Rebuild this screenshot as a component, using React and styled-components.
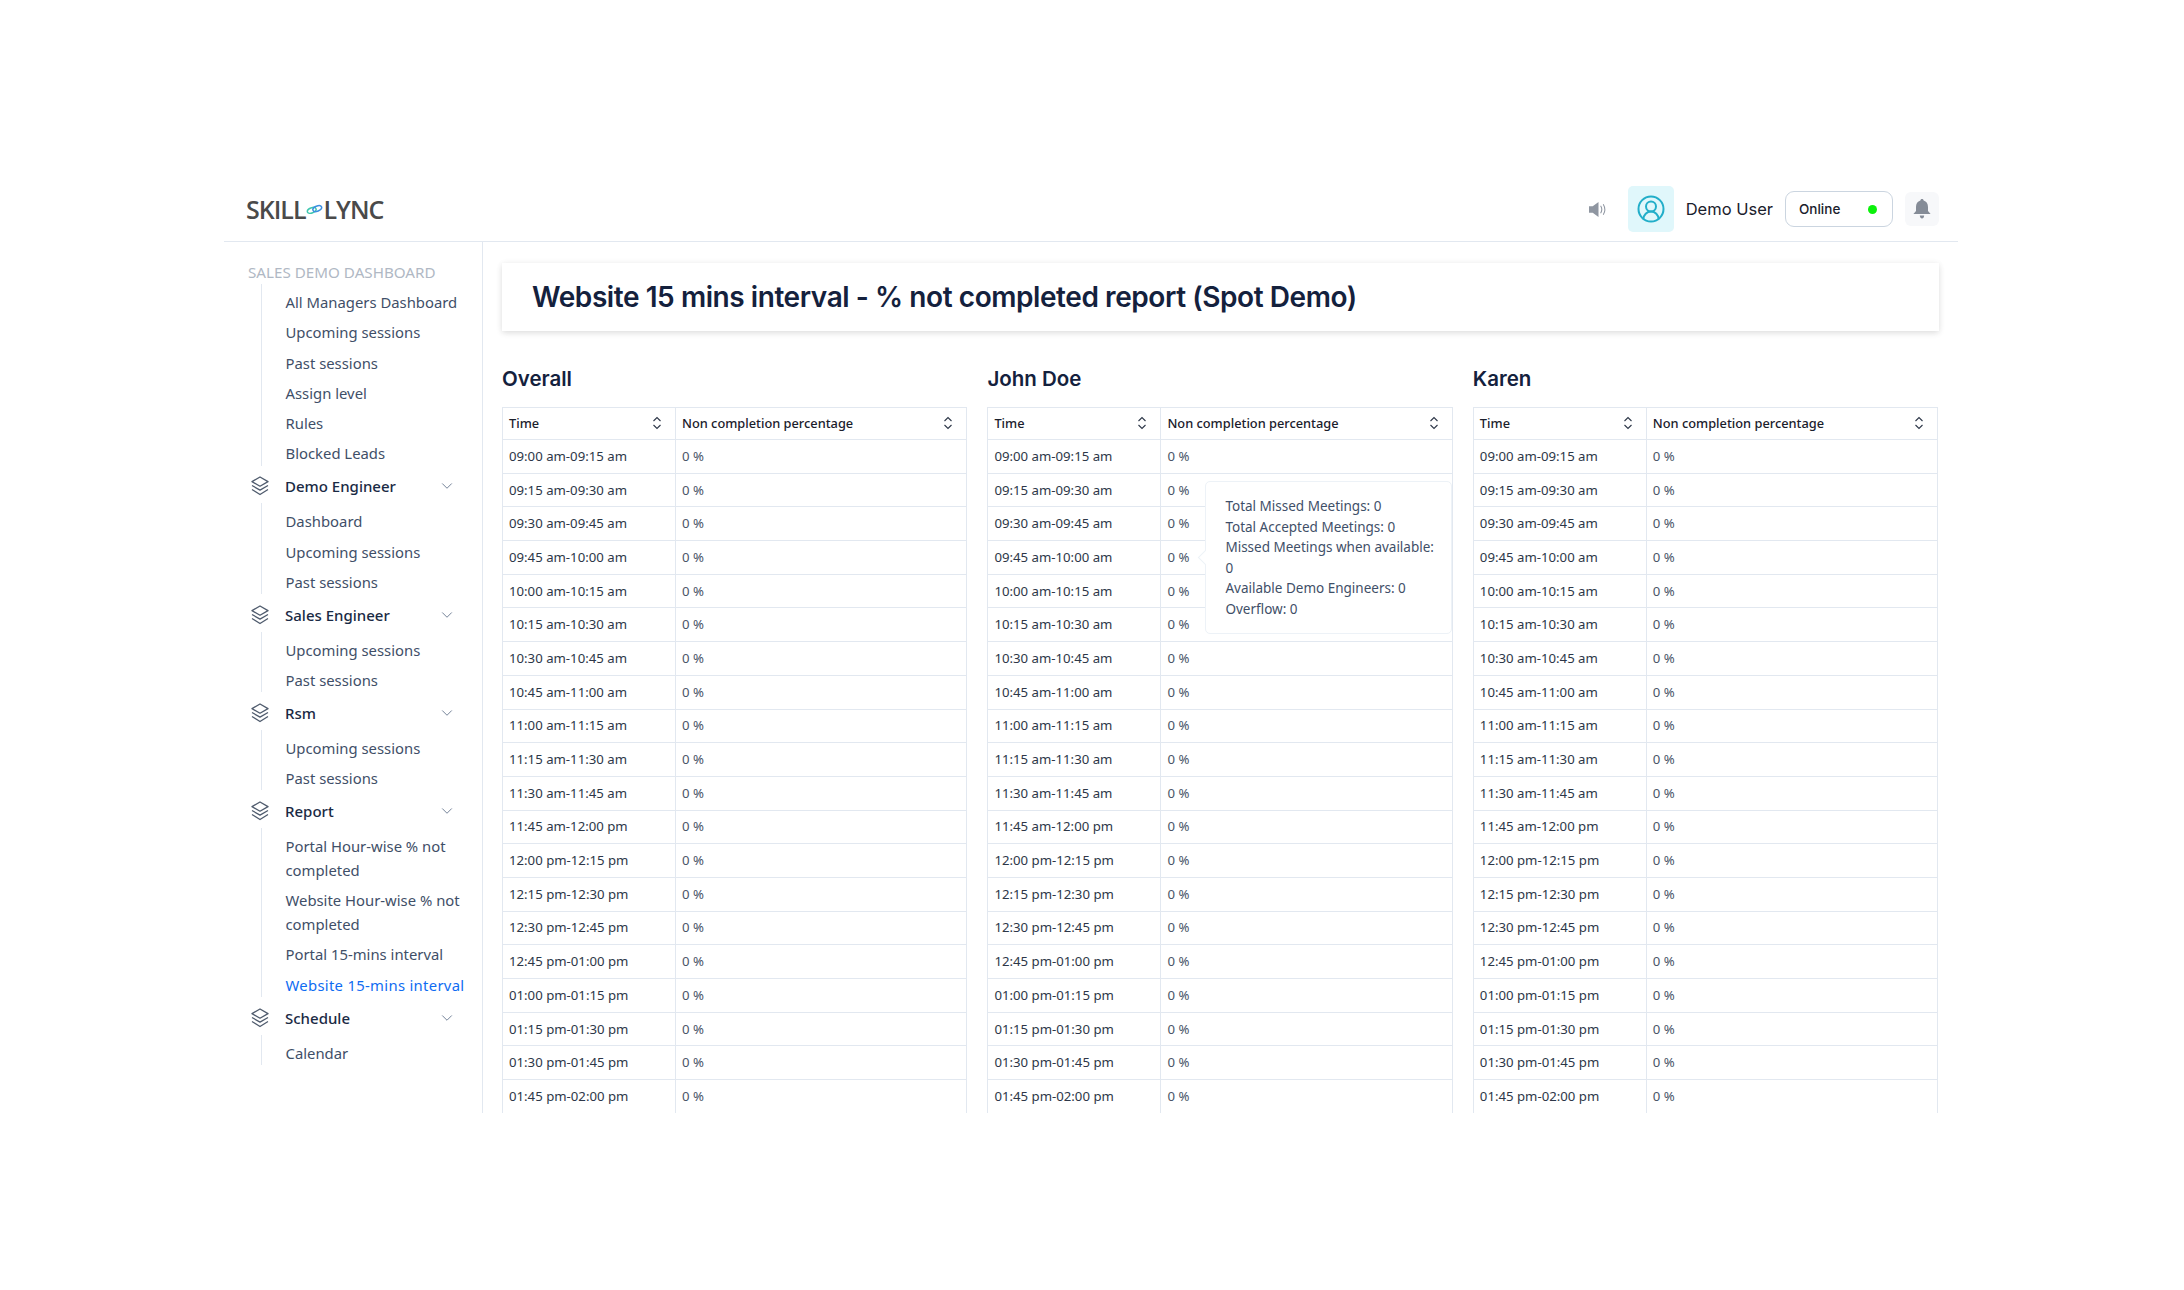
import React from 'react'
import styled, { createGlobalStyle } from 'styled-components'
import { ChevronDown, CircleUserRound } from 'lucide-react'

const GlobalStyle = createGlobalStyle`
    html, body {
        margin: 0;
        background: #fff;
    }
    * {
        box-sizing: border-box;
    }
`

const bodyFont = `'Noto Sans', 'Liberation Sans', sans-serif`
const headFont = `Inter, 'Liberation Sans', sans-serif`

const menu = [
    {
        items: [
            'All Managers Dashboard',
            'Upcoming sessions',
            'Past sessions',
            'Assign level',
            'Rules',
            'Blocked Leads'
        ]
    },
    { title: 'Demo Engineer', items: ['Dashboard', 'Upcoming sessions', 'Past sessions'] },
    { title: 'Sales Engineer', items: ['Upcoming sessions', 'Past sessions'] },
    { title: 'Rsm', items: ['Upcoming sessions', 'Past sessions'] },
    {
        title: 'Report',
        items: [
            'Portal Hour-wise % not completed',
            'Website Hour-wise % not completed',
            'Portal 15-mins interval',
            'Website 15-mins interval'
        ]
    },
    { title: 'Schedule', items: ['Calendar'] }
]

const slots = [
    '09:00 am-09:15 am', '09:15 am-09:30 am', '09:30 am-09:45 am', '09:45 am-10:00 am',
    '10:00 am-10:15 am', '10:15 am-10:30 am', '10:30 am-10:45 am', '10:45 am-11:00 am',
    '11:00 am-11:15 am', '11:15 am-11:30 am', '11:30 am-11:45 am', '11:45 am-12:00 pm',
    '12:00 pm-12:15 pm', '12:15 pm-12:30 pm', '12:30 pm-12:45 pm', '12:45 pm-01:00 pm',
    '01:00 pm-01:15 pm', '01:15 pm-01:30 pm', '01:30 pm-01:45 pm', '01:45 pm-02:00 pm'
]

const SortIcon = () => (
    <SortSvg viewBox='0 0 10 14' fill='none' stroke='#2d3748' strokeWidth='1.1'>
        <path d='M1.500 5 5 1.500 8.500 5' />
        <path d='M1.500 9 5 12.500 8.500 9' />
    </SortSvg>
)

const LayersIcon = () => (
    <svg width='18' height='20' viewBox='0 0 18 20' fill='none' stroke='#4f5b6d' strokeWidth='1.3' strokeLinejoin='round'>
        <path d='M9 1 17 5.600 9 10.200 1 5.600z' />
        <path d='M1 9.500 9 14.100 17 9.500' />
        <path d='M1 13.500 9 18.500 17 13.500' />
    </svg>
)

const ReportTable = ({ name, withTooltip }) => (
    <section>
        <TableName>{name}</TableName>
        <TableWrap>
            <Table>
                <colgroup>
                    <col width='173' />
                    <col />
                </colgroup>
                <thead>
                    <tr>
                        <Th>
                            <ThInner>
                                Time
                                <SortIcon />
                            </ThInner>
                        </Th>
                        <Th>
                            <ThInner>
                                Non completion percentage
                                <SortIcon />
                            </ThInner>
                        </Th>
                    </tr>
                </thead>
                <tbody>
                    {slots.map(slot => (
                        <tr key={slot}>
                            <TimeCell>{slot}</TimeCell>
                            <PercentCell>0 %</PercentCell>
                        </tr>
                    ))}
                </tbody>
            </Table>
            {withTooltip && (
                <Tooltip>
                    Total Missed Meetings: 0
                    <br />
                    Total Accepted Meetings: 0
                    <br />
                    Missed Meetings when available:
                    <br />
                    0
                    <br />
                    Available Demo Engineers: 0
                    <br />
                    Overflow: 0
                </Tooltip>
            )}
        </TableWrap>
    </section>
)

const App = () => (
    <Page>
        <GlobalStyle />
        <Frame>
            <Header>
                <Logo>
                    SKILL
                    <svg width='17' height='11' viewBox='0 0 18 12' fill='none' strokeWidth='1.600'>
                        <ellipse cx='6' cy='7' rx='5' ry='2.800' transform='rotate(-22 6 7)' stroke='#3fc7b0' />
                        <ellipse cx='12' cy='5' rx='5' ry='2.800' transform='rotate(-22 12 5)' stroke='#3c8fe0' />
                    </svg>
                    <LogoTail>LYNC</LogoTail>
                </Logo>
                <HeaderRight>
                    <svg width='19' height='17' viewBox='0 0 18 16' fill='#8f96a1'>
                        <path d='M0 5h3.500L9 1v14l-5.500-4H0z' />
                        <path d='M11 4.500c1.300 2 1.300 5 0 7M13.500 3c1.800 3 1.800 7 0 10' fill='none' stroke='#8f96a1' strokeWidth='1' />
                    </svg>
                    <Avatar>
                        <CircleUserRound size={30} strokeWidth={1.6} color='#22aec9' />
                    </Avatar>
                    <UserName>Demo User</UserName>
                    <StatusPill>
                        Online
                        <StatusDot />
                    </StatusPill>
                    <BellBox>
                        <svg width='18' height='20' viewBox='0 0 18 20' fill='#858c97'>
                            <path d='M9 0c1 0 1.600.7 1.600 1.600C13.500 2.400 15 4.800 15 8v4l2.600 3H.4L3 12V8c0-3.200 1.500-5.600 4.400-6.400C7.400.7 8 0 9 0z' />
                            <path d='M6.800 16.500h4.400C11 18.300 10.200 19.500 9 19.500s-2-1.200-2.200-3z' />
                        </svg>
                    </BellBox>
                </HeaderRight>
            </Header>
            <Body>
                <Sidebar>
                    <SideHeading>SALES DEMO DASHBOARD</SideHeading>
                    {menu.map((group, i) => (
                        <div key={i}>
                            {group.title && (
                                <GroupHeader>
                                    <GroupIcon>
                                        <LayersIcon />
                                    </GroupIcon>
                                    <GroupTitle>{group.title}</GroupTitle>
                                    <ChevronDown size={18} strokeWidth={1.3} color='#718096' />
                                </GroupHeader>
                            )}
                            <SubList>
                                {group.items.map(item => (
                                    <SubItem key={item} $active={item === 'Website 15-mins interval'}>
                                        {item}
                                    </SubItem>
                                ))}
                            </SubList>
                        </div>
                    ))}
                </Sidebar>
                <Main>
                    <TitleCard>
                        <Title>Website 15 mins interval - % not completed report (Spot Demo)</Title>
                    </TitleCard>
                    <Tables>
                        <ReportTable name='Overall' />
                        <ReportTable name='John Doe' withTooltip />
                        <ReportTable name='Karen' />
                    </Tables>
                </Main>
            </Body>
        </Frame>
    </Page>
)

export default App

const Page = styled.div`
    height: 1290px;
    padding: 177px 226px 0 224px;
    overflow: hidden;
`

const Frame = styled.div`
    height: 936px;
    overflow: hidden;
    display: flex;
    flex-direction: column;
`

const Header = styled.header`
    height: 65px;
    flex: none;
    display: flex;
    align-items: center;
    justify-content: space-between;
    padding: 0 19px 0 22px;
    border-bottom: 1px solid #e2e8f0;
`

const Logo = styled.div`
    display: flex;
    align-items: center;
    font-family: 'Open Sans', sans-serif;
    font-weight: 600;
    font-size: 25px;
    letter-spacing: -1px;
    color: #4a4a4a;
`

const LogoTail = styled.span`
    margin-left: 1px;
`

const HeaderRight = styled.div`
    display: flex;
    align-items: center;
`

const Avatar = styled.div`
    width: 46px;
    height: 46px;
    margin-left: 20px;
    border-radius: 5px;
    background: #e0f7fb;
    display: flex;
    align-items: center;
    justify-content: center;
`

const UserName = styled.span`
    margin-left: 12px;
    font-family: ${headFont};
    font-size: 16.5px;
    color: #1a202c;
`

const StatusPill = styled.div`
    width: 108px;
    height: 36px;
    margin-left: 12px;
    padding: 0 15px 0 13px;
    border: 1px solid #cbd5e0;
    border-radius: 9px;
    display: flex;
    align-items: center;
    justify-content: space-between;
    font-family: ${headFont};
    font-size: 13.5px;
    font-weight: 500;
    color: #1a202c;
`

const StatusDot = styled.span`
    width: 9px;
    height: 9px;
    border-radius: 50%;
    background: #0bf10b;
`

const BellBox = styled.div`
    width: 34px;
    height: 34px;
    margin-left: 12px;
    border-radius: 6px;
    background: #f7f8fa;
    display: flex;
    align-items: center;
    justify-content: center;
`

const Body = styled.div`
    flex: 1;
    display: flex;
    min-height: 0;
`

const Sidebar = styled.aside`
    width: 259px;
    flex: none;
    padding: 18px 12px 0 24px;
    border-right: 1px solid #e2e8f0;
    font-family: ${bodyFont};
`

const SideHeading = styled.div`
    height: 24px;
    line-height: 24px;
    font-size: 15.2px;
    color: #b0b8c4;
    white-space: nowrap;
`

const GroupHeader = styled.div`
    height: 34px;
    margin-top: 3.5px;
    display: flex;
    align-items: center;
    padding-right: 14px;
`

const GroupIcon = styled.span`
    width: 37px;
    display: flex;
    padding-left: 3px;
`

const GroupTitle = styled.span`
    flex: 1;
    font-size: 15px;
    font-weight: 500;
    color: #1a2a44;
`

const SubList = styled.ul`
    list-style: none;
    margin: 0 0 0 12.5px;
    padding: 0 0 0 24px;
    border-left: 1.5px solid #e2e8f0;
`

const SubItem = styled.li`
    padding-top: 6px;
    padding-bottom: 0.3px;
    line-height: 24px;
    font-size: 14.85px;
    letter-spacing: ${p => (p.$active ? '0.3px' : '0')};
    color: ${p => (p.$active ? '#0f6cf2' : '#3f4f68')};
`

const Main = styled.main`
    flex: 1;
    min-width: 0;
    padding: 21px 19px 0;
`

const TitleCard = styled.div`
    height: 68px;
    padding: 0 30px;
    display: flex;
    align-items: center;
    background: #fff;
    box-shadow: 0 2px 6px rgba(0, 0, 0, 0.12), 0 0 8px rgba(0, 0, 0, 0.03);
`

const Title = styled.h1`
    margin: 0;
    font-family: ${headFont};
    font-size: 28px;
    letter-spacing: -0.43px;
    font-weight: 600;
    color: #14213d;
`

const Tables = styled.div`
    display: grid;
    grid-template-columns: repeat(3, 1fr);
    gap: 20.3px;
    margin-top: 34px;
    padding-right: 1px;
`

const TableName = styled.h2`
    margin: 0 0 14px;
    height: 28px;
    line-height: 28px;
    font-family: ${headFont};
    font-size: 20.5px;
    font-weight: 600;
    color: #14213d;
`

const TableWrap = styled.div`
    position: relative;
`

const Table = styled.table`
    width: 100%;
    table-layout: fixed;
    border-collapse: collapse;
    font-family: ${bodyFont};
    font-size: 13.2px;
`

const Th = styled.th`
    height: 32px;
    padding: 0 6px;
    border: 1.5px solid #e2e8f0;
    font-size: 12.8px;
    font-weight: 500;
    text-align: left;
    color: #1a202c;
`

const ThInner = styled.div`
    display: flex;
    align-items: center;
    justify-content: space-between;
    padding: 0 7px 2px 0;
`

const SortSvg = styled.svg`
    width: 10px;
    height: 14px;
`

const TimeCell = styled.td`
    height: 33.7px;
    padding: 0 6px 1px;
    border: 1.5px solid #e2e8f0;
    color: #2d3748;
    white-space: nowrap;
`

const PercentCell = styled(TimeCell)`
    color: #4a5568;
`

const Tooltip = styled.div`
    position: absolute;
    left: 218px;
    top: 74px;
    width: 247px;
    height: 153px;
    padding: 14px 0 0 19px;
    background: #fff;
    border: 1px solid #edf2f7;
    border-radius: 5px;
    font-family: ${bodyFont};
    font-size: 13.5px;
    line-height: 20.5px;
    color: #3f4f68;
    white-space: nowrap;

    &::before {
        content: '';
        position: absolute;
        left: -6px;
        top: 70px;
        width: 10px;
        height: 10px;
        background: #fff;
        border-left: 1px solid #edf2f7;
        border-bottom: 1px solid #edf2f7;
        transform: rotate(45deg);
    }
`
